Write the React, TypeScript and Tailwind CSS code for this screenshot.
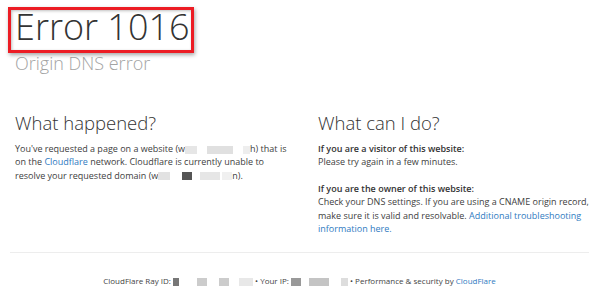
const font = { fontFamily: '"Open Sans", "Liberation Sans", sans-serif' };

function Blur({ parts }: { parts: [number, string][] }) {
  return (
    <span className="inline-flex items-center gap-[2px] align-middle blur-[0.6px]">
      {parts.map(([w, c], i) => (
        <span key={i} className="inline-block h-[8px]" style={{ width: w, background: c }} />
      ))}
    </span>
  );
}

export default function App() {
  return (
    <div className="w-[599px] h-[304px] bg-white text-[#404040] overflow-hidden" style={font}>
      <header className="relative pl-[15px] pt-[7px]">
        <h1 className="text-[36px] leading-[40px] font-light text-[#333]">Error 1016</h1>
        <h2 className="mt-[4px] text-[18px] leading-[24px] font-light text-[#a3a3a3]">Origin DNS error</h2>
        <span className="absolute left-[8px] top-[7px] w-[186px] h-[46px] border-[3px] border-[#ec1c24] shadow-[1px_2px_4px_rgba(0,0,0,0.35),inset_1px_1px_3px_rgba(0,0,0,0.25)]" />
      </header>

      <section className="flex pl-[15px] mt-[34px]">
        <div className="w-[280px] shrink-0">
          <h3 className="text-[18.5px] leading-[28px] font-light text-[#333]">What happened?</h3>
          <p className="mt-[5px] text-[9px] leading-[13.4px]">
            You've requested a page on a website (w<Blur parts={[[12, '#e6e6e6'], [6, '#fff'], [26, '#e0e0e0'], [6, '#fff'], [7, '#eee']]} />h) that is on
            the <span className="text-[#2f7bbf]">Cloudflare</span> network. Cloudflare is currently unable to resolve your
            requested domain (w<Blur parts={[[12, '#e2e2e2'], [8, '#fff'], [10, '#555'], [4, '#fff'], [20, '#e6e6e6'], [10, '#f0f0f0']]} />n).
          </p>
        </div>
        <div className="ml-[23px] w-[275px] shrink-0">
          <h3 className="text-[18.5px] leading-[28px] font-light text-[#333]">What can I do?</h3>
          <div className="mt-[5px] text-[9px] leading-[13.4px]">
            <p className="font-semibold text-[#333]">If you are a visitor of this website:</p>
            <p>Please try again in a few minutes.</p>
            <p className="mt-[13px] font-semibold text-[#333]">If you are the owner of this website:</p>
            <p>
              Check your DNS settings. If you are using a CNAME origin record, make sure it is valid and resolvable.{' '}
              <span className="text-[#2f7bbf]">Additional troubleshooting information here.</span>
            </p>
          </div>
        </div>
      </section>

      <div className="mx-[10px] mt-[17px] border-t border-[#ededed]" />

      <footer className="mt-[22px] text-center text-[8px] leading-[12px] text-[#444]">
        CloudFlare Ray ID: <Blur parts={[[6, '#777'], [14, '#fff'], [10, '#ccc'], [8, '#fff'], [10, '#ccc'], [6, '#fff'], [14, '#e8e8e8']]} /> •
        Your IP: <Blur parts={[[10, '#999'], [4, '#fff'], [20, '#c4c4c4'], [8, '#fff'], [7, '#ddd']]} /> • Performance &amp; security
        by <span className="text-[#2f7bbf]">CloudFlare</span>
      </footer>
    </div>
  );
}
